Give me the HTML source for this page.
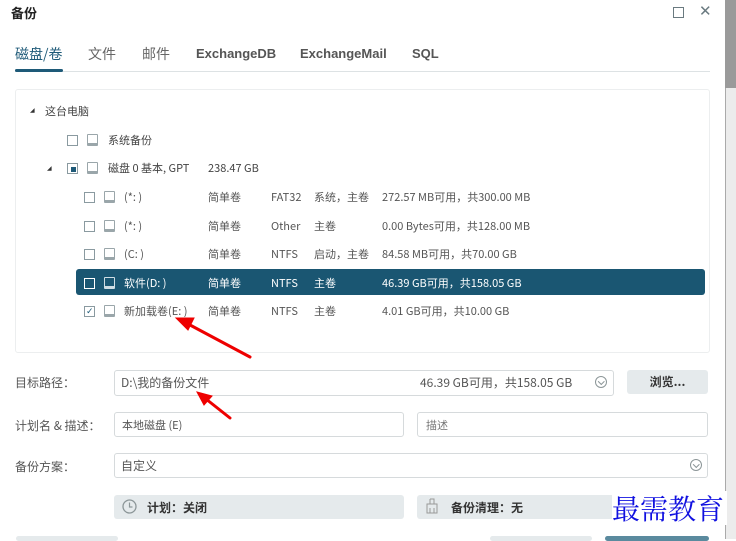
<!DOCTYPE html><html><head><meta charset="utf-8"><style>
body{margin:0;width:736px;height:539px;background:#fff;position:relative;overflow:hidden;font-family:"Noto Sans CJK SC","Liberation Sans",sans-serif;color:#444;font-size:11px}
.a{position:absolute;white-space:nowrap;line-height:16px}
.cb{position:absolute;width:9px;height:9px;border:1.5px solid #8a9aa0;background:#fff}
.dr{position:absolute;border:1px solid #9aa6aa;border-bottom-width:3px;border-radius:1px;box-sizing:border-box;width:11px;height:12px}
.in{position:absolute;border:1px solid #d6dadc;border-radius:3px;background:#fff;box-sizing:border-box}
.lbl{position:absolute;font-size:12px;color:#555;line-height:16px}
.dd{position:absolute;width:12px;height:12px;border:1.3px solid #8c9698;border-radius:50%;box-sizing:border-box}
.dd:after{content:"";position:absolute;left:2.5px;top:1.5px;width:3.5px;height:3.5px;border-right:1.2px solid #8c9698;border-bottom:1.2px solid #8c9698;transform:rotate(45deg)}
.t{font-family:"Liberation Sans",sans-serif}
</style></head><body>
<div class="a" style="left:11px;top:5px;font-size:13px;font-weight:bold;color:#222">备份</div>
<div class="a" style="left:673px;top:7px;width:9px;height:9px;border:1.3px solid #6a7a80"></div>
<div class="a" style="left:699px;top:3px;font-size:15px;color:#6a7a80" class="t">✕</div>
<div class="a" style="left:725px;top:0;width:11px;height:88px;background:#9a9a9a"></div>
<div class="a" style="left:725px;top:88px;width:11px;height:451px;background:#ececec;border-left:1px solid #aaa"></div>
<div class="a" style="left:15px;top:46px;font-size:14px;color:#1e5a78">磁盘/卷</div>
<div class="a" style="left:88px;top:46px;font-size:14px;color:#666">文件</div>
<div class="a" style="left:142px;top:46px;font-size:14px;color:#666">邮件</div>
<div class="a t" style="left:196px;top:46px;font-size:13px;font-weight:bold;color:#555">ExchangeDB</div>
<div class="a t" style="left:300px;top:46px;font-size:13px;font-weight:bold;color:#555">ExchangeMail</div>
<div class="a t" style="left:412px;top:46px;font-size:13px;font-weight:bold;color:#555">SQL</div>
<div class="a" style="left:15px;top:71px;width:695px;height:1px;background:#dde2e4"></div>
<div class="a" style="left:15px;top:69px;width:48px;height:3px;background:#1e5a78;border-radius:2px"></div>
<div class="a" style="left:15px;top:89px;width:693px;height:262px;border:1px solid #eceeef;border-radius:3px"></div>
<div class="a t" style="left:30px;top:103px;font-size:6px;color:#333">◢</div>
<div class="a" style="left:45px;top:103px;">这台电脑</div>
<div class="cb" style="left:67px;top:135px"></div><div class="dr" style="left:87px;top:134px"></div><div class="a" style="left:108px;top:132px">系统备份</div>
<div class="a t" style="left:47px;top:161px;font-size:6px;color:#333">◢</div>
<div class="cb" style="left:67px;top:163px"></div><div class="a" style="left:71px;top:167px;width:5px;height:5px;background:#1e5a78"></div><div class="dr" style="left:87px;top:162px"></div><div class="a" style="left:108px;top:160px">磁盘 0 基本, GPT</div><div class="a" style="left:208px;top:160px">238.47 GB</div>
<div class="a" style="left:76px;top:269px;width:629px;height:26px;background:#1a5672;border-radius:3px"></div>
<div id="rows"></div>
<script>
var r=[["(*: )","简单卷","FAT32","系统，主卷","272.57 MB可用，共300.00 MB",197],["(*: )","简单卷","Other","主卷","0.00 Bytes可用，共128.00 MB",226],["(C: )","简单卷","NTFS","启动，主卷","84.58 MB可用，共70.00 GB",254],["软件(D: )","简单卷","NTFS","主卷","46.39 GB可用，共158.05 GB",283],["新加载卷(E: )","简单卷","NTFS","主卷","4.01 GB可用，共10.00 GB",311]];
var h="";r.forEach(function(x,i){var y=x[5],c=i==3?"#fff":"#555",bc=i==3?"#fff":"#8a9aa0";
h+='<div class="cb" style="left:84px;top:'+(y-5)+'px;border-color:'+bc+';background:'+(i==3?"#1a5672":"#fff")+'"></div>';
if(i==4)h+='<div class="a t" style="left:86px;top:'+(y-8)+'px;font-size:9px;color:#1e5a78">✓</div>';
h+='<div class="dr" style="left:104px;top:'+(y-6)+'px;border-color:'+(i==3?"#cfdde4":"#9aa6aa")+'"></div>';
[[124,0],[208,1],[271,2],[314,3],[382,4]].forEach(function(p){h+='<div class="a" style="left:'+p[0]+'px;top:'+(y-8)+'px;color:'+c+'">'+x[p[1]]+'</div>'});});
document.getElementById("rows").innerHTML=h;
</script>
<div class="lbl" style="left:15px;top:375px">目标路径：</div>
<div class="in" style="left:114px;top:370px;width:500px;height:26px"></div>
<div class="a" style="left:121px;top:375px;font-size:12px;color:#555">D:\我的备份文件</div>
<div class="a" style="left:420px;top:375px;font-size:12px;color:#555">46.39 GB可用，共158.05 GB</div>
<div class="dd" style="left:595px;top:376px"></div>
<div class="a" style="left:627px;top:370px;width:81px;height:24px;background:#e5eaec;border-radius:3px;text-align:center;line-height:24px;font-size:12px;font-weight:bold;color:#333">浏览...</div>
<div class="lbl" style="left:15px;top:418px">计划名 &amp; 描述：</div>
<div class="in" style="left:114px;top:412px;width:290px;height:25px"></div><div class="a" style="left:122px;top:417px;color:#555">本地磁盘 (E)</div>
<div class="in" style="left:417px;top:412px;width:291px;height:25px"></div><div class="a" style="left:426px;top:417px;color:#777">描述</div>
<div class="lbl" style="left:15px;top:459px">备份方案：</div>
<div class="in" style="left:114px;top:453px;width:594px;height:25px"></div><div class="a" style="left:121px;top:458px;font-size:12px;color:#555">自定义</div>
<div class="dd" style="left:690px;top:459px"></div>
<div class="a" style="left:114px;top:495px;width:290px;height:24px;background:#e5eaec;border-radius:3px"></div>
<svg class="a" style="left:122px;top:499px" width="15" height="15"><circle cx="7.5" cy="7.5" r="6.5" fill="none" stroke="#8c9698" stroke-width="1.3"/><path d="M7.5 3.5V8H10.5" fill="none" stroke="#8c9698" stroke-width="1.2"/></svg>
<div class="a" style="left:147px;top:500px;font-size:12px;font-weight:bold;color:#333">计划：关闭</div>
<div class="a" style="left:417px;top:495px;width:291px;height:24px;background:#e5eaec;border-radius:3px"></div>
<svg class="a" style="left:425px;top:498px" width="14" height="16"><path d="M5 1h4v5M5 1v5M2 6h10v9H2z M5 10v5M9 10v5" fill="none" stroke="#999" stroke-width="1"/></svg>
<div class="a" style="left:451px;top:500px;font-size:12px;font-weight:bold;color:#333">备份清理：无</div>
<div class="a" style="left:612px;top:491px;font-size:28px;color:#1010e0;font-family:'Noto Serif CJK SC',serif;background:#fff;line-height:34px;width:115px">最需教育</div>
<div class="a" style="left:16px;top:536px;width:102px;height:5px;background:#e5eaec;border-radius:3px"></div>
<div class="a" style="left:490px;top:536px;width:102px;height:5px;background:#e5eaec;border-radius:3px"></div>
<div class="a" style="left:605px;top:536px;width:104px;height:5px;background:#5a8a9e;border-radius:3px"></div>
<svg class="a" style="left:0;top:0" width="736" height="539"><g stroke="#e00" stroke-width="3" fill="#e00" stroke-linecap="round">
<line x1="250" y1="357" x2="190" y2="325"/><polygon points="176,318 194,318 188,330" stroke-width="1"/>
<line x1="230" y1="418" x2="206" y2="399"/><polygon points="197,392 212,396 204,405" stroke-width="1"/></g></svg>
</body></html>
